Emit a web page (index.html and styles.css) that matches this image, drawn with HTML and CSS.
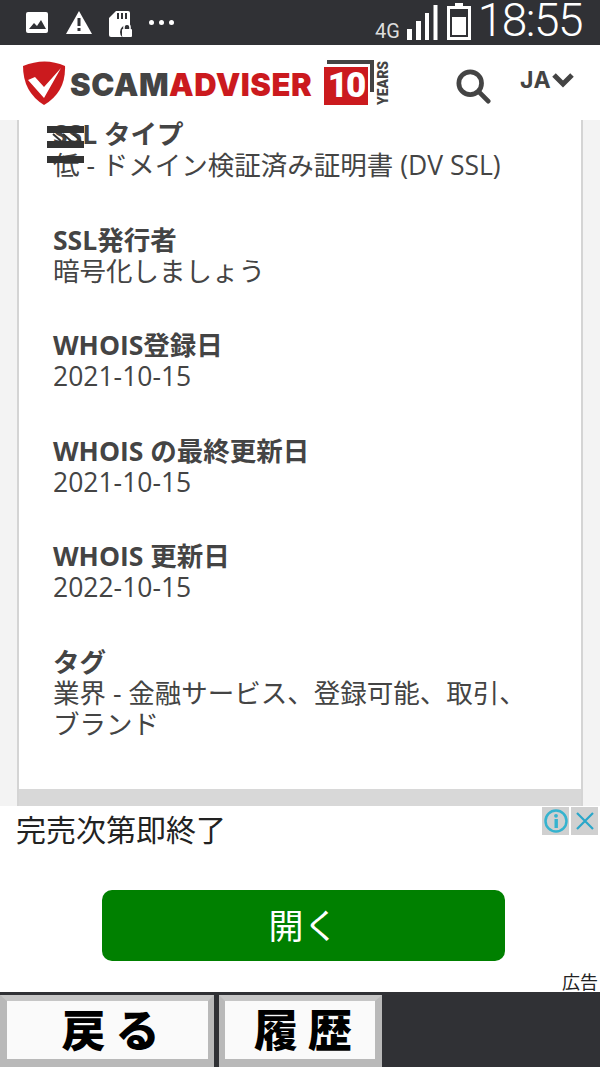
FILE: index.html
```html
<!DOCTYPE html>
<html lang="ja">
<head>
  <meta charset="UTF-8">
  <title>Scamadviser</title>
  <link rel="stylesheet" href="styles.css">
</head>
<body>

  <div class="status-bar">
    <div class="status-left">
      <svg width="24" height="23" viewBox="0 0 24 23"><rect x="1" y="1" width="22" height="21" rx="2" fill="#fff"/><path d="M4 18l5-6 3 3 4-6 5 9z" fill="#303135"/></svg>
      <svg width="26" height="23" viewBox="0 0 26 23"><path d="M13 0L26 23H0z" fill="#fff"/><rect x="11.5" y="7" width="3" height="8" fill="#303135"/><rect x="11.5" y="17" width="3" height="3" fill="#303135"/></svg>
      <svg width="24" height="26" viewBox="0 0 24 26"><path d="M7 0h12a2 2 0 0 1 2 2v24H2a2 2 0 0 1-2-2V7z" fill="#fff"/><path d="M8 2h2v6H8zM12 2h2v6h-2zM16 2h2v6h-2z" fill="#303135"/><circle cx="18" cy="21" r="7" fill="#303135"/><rect x="13" y="18" width="10" height="8" rx="1" fill="#fff"/><path d="M15 19v-3a3 3 0 0 1 6 0v3" fill="none" stroke="#fff" stroke-width="1.6"/></svg>
      <div class="dots"><span></span><span></span><span></span></div>
    </div>
    <div class="status-right">
      <span class="net">4G</span>
      <svg width="31" height="35" viewBox="0 0 31 35"><path d="M0 24h5v11H0zM9 16h5v19H9zM18 8h4v27h-4zM26.500 0h4v35h-4z" fill="#fff"/></svg>
      <svg class="battery" width="24" height="37" viewBox="0 0 24 37"><path d="M8 0h8v3h-8z" fill="#fff"/><rect x="1.500" y="4.500" width="21" height="31" fill="none" stroke="#fff" stroke-width="3"/><rect x="5" y="14" width="14" height="18" fill="#fff"/></svg>
      <span class="time">18:55</span>
    </div>
  </div>

  <header class="site-header">
    <svg class="shield" width="43" height="46" viewBox="0 0 43 46">
      <path d="M0 6Q22 -3 42 6Q43 32 21 45Q0 32 0 6z" fill="#cb1a1e"/>
      <path d="M5 20l7-3 9 10L38 8 21 38z" fill="#fff"/>
    </svg>
    <div class="brand"><span class="scam">SCAM</span><span class="adviser">ADVISER</span></div>
    <div class="anniversary">
      <div class="ten-back"></div>
      <div class="ten">10</div>
      <div class="years">YEARS</div>
    </div>
    <svg class="search" width="35" height="35" viewBox="0 0 37 37"><circle cx="15" cy="15" r="12" fill="none" stroke="#444" stroke-width="5"/><path d="M24 24l10 10" stroke="#444" stroke-width="5" stroke-linecap="round"/></svg>
    <div class="lang">JA<svg width="24" height="16" viewBox="0 0 24 16"><path d="M3 3l9 9 9-9" fill="none" stroke="#444" stroke-width="5"/></svg></div>
  </header>

  <main class="content">
    <div class="card">
      <div class="info-row">
        <h4>SSL タイプ</h4>
        <p>低 - ドメイン検証済み証明書 (DV SSL)</p>
        <svg class="scribble" width="37" height="37" viewBox="0 0 37 37"><path d="M0 0h37v7H0zM0 15h37v7H0zM0 30h37v7H0z" fill="#333"/><path d="M6 8l8 7M16 8l8 7M26 8l8 7" stroke="#333" stroke-width="2"/></svg>
      </div>
      <div class="info-row">
        <h4>SSL発行者</h4>
        <p>暗号化しましょう</p>
      </div>
      <div class="info-row">
        <h4>WHOIS登録日</h4>
        <p>2021-10-15</p>
      </div>
      <div class="info-row">
        <h4>WHOIS の最終更新日</h4>
        <p>2021-10-15</p>
      </div>
      <div class="info-row">
        <h4>WHOIS 更新日</h4>
        <p>2022-10-15</p>
      </div>
      <div class="info-row">
        <h4>タグ</h4>
        <p>業界 - 金融サービス、登録可能、取引、<br>ブランド</p>
      </div>
      <div class="card-foot"></div>
    </div>
  </main>

  <section class="ad">
    <div class="ad-title">完売次第即終了</div>
    <div class="ad-icons">
      <div class="ad-icon"><svg width="24" height="24" viewBox="0 0 24 24"><circle cx="12" cy="12" r="10.500" fill="none" stroke="#35b3cf" stroke-width="2.500"/><rect x="10.500" y="10" width="3.400" height="9" fill="#35b3cf"/><circle cx="12" cy="6.800" r="1.900" fill="#35b3cf"/></svg></div>
      <div class="ad-icon"><svg width="22" height="22" viewBox="0 0 22 22"><path d="M3 3l16 16M19 3L3 19" stroke="#2aa7c9" stroke-width="2.200"/></svg></div>
    </div>
    <button class="ad-button">開く</button>
    <div class="ad-label">広告</div>
  </section>

  <nav class="bottom-bar">
    <button class="nav-btn back">戻る</button>
    <button class="nav-btn history">履歴</button>
  </nav>

</body>
</html>
```

FILE: styles.css
```css
:root {
  --bar: #303135;
  --text-dark: #444;
  --brand-red: #cb1a1e;
}

* {
  box-sizing: border-box;
}

body {
  font-family: "Noto Sans CJK JP", "Open Sans", sans-serif;
  margin: 0;
  width: 600px;
  height: 1067px;
  overflow: hidden;
  display: flex;
  flex-direction: column;
  color: var(--text-dark);
}

/* status bar */
.status-bar {
  height: 45px;
  background-color: var(--bar);
  display: flex;
  justify-content: space-between;
  padding: 4px 18px 0 25px;
  color: #fff;
}

.status-left {
  display: flex;
  align-items: flex-start;
  gap: 17px;
  padding-top: 7px;
}

.dots {
  display: flex;
  gap: 5px;
  padding-top: 9px;
  margin-left: -1px;
}

.dots span {
  width: 5px;
  height: 5px;
  border-radius: 50%;
  background-color: #fff;
}

.status-right {
  display: flex;
  align-items: flex-end;
  height: 36px;
}

.net {
  font-family: "Roboto", sans-serif;
  font-size: 20px;
  line-height: 18px;
  color: #ddd;
  margin-right: 7px;
}

.battery {
  margin-left: 9px;
}

.time {
  font-family: "Roboto", sans-serif;
  font-weight: 300;
  font-size: 46px;
  line-height: 40px;
  letter-spacing: -1.5px;
  margin-left: 7px;
}

/* header */
.site-header {
  height: 75px;
  flex-shrink: 0;
  background-color: #fff;
  display: flex;
  align-items: center;
  padding: 0 0 0 23px;
}

.brand {
  font-family: "Inter", sans-serif;
  font-weight: 900;
  font-size: 31px;
  letter-spacing: 0.5px;
  width: 250px;
  white-space: nowrap;
  margin-left: 4px;
  margin-top: 3px;
}

.scam {
  color: var(--text-dark);
}

.adviser {
  color: var(--brand-red);
}

.anniversary {
  position: relative;
  width: 68px;
  height: 46px;
  margin-left: 4px;
}

.ten-back {
  position: absolute;
  left: 3px;
  top: 0;
  width: 47px;
  height: 32px;
  border-top: 4px solid #444;
  border-right: 4px solid #444;
}

.ten {
  position: absolute;
  left: 0;
  top: 7px;
  width: 44px;
  height: 38px;
  background-color: var(--brand-red);
  color: #fff;
  font-family: "Roboto", sans-serif;
  font-weight: 900;
  font-size: 35px;
  line-height: 38px;
  letter-spacing: -2px;
  text-align: center;
}

.years {
  position: absolute;
  left: 37px;
  top: 16px;
  width: 44px;
  font-family: "Roboto", sans-serif;
  font-weight: 900;
  font-size: 14px;
  line-height: 14px;
  text-align: center;
  transform: rotate(-90deg);
  color: #444;
}

.search {
  margin-left: 64px;
  margin-top: 7px;
}

.lang {
  font-family: "Inter", sans-serif;
  font-weight: 700;
  font-size: 23px;
  letter-spacing: 0.5px;
  margin-left: 29px;
  margin-bottom: 5px;
  display: flex;
  align-items: center;
}

/* content */
.content {
  height: 686px;
  flex-shrink: 0;
  overflow: hidden;
  background-color: #f3f3f3;
  padding: 0 17px;
}

.card {
  height: 100%;
  background-color: #fff;
  border-left: 2px solid #d4d4d4;
  border-right: 2px solid #d4d4d4;
  padding-left: 34px;
  display: flex;
  flex-direction: column;
  position: relative;
  font-family: "Open Sans", "Noto Sans CJK JP", sans-serif;
}

.info-row {
  position: relative;
  padding-bottom: 43.5px;
}

.info-row:first-child {
  margin-top: -1px;
}

.info-row h4 {
  font-size: 26.5px;
  line-height: 31px;
  font-weight: 700;
  margin: 0;
}

.info-row p {
  font-size: 26.5px;
  line-height: 31px;
  margin: 0;
}

.scribble {
  position: absolute;
  left: -6px;
  top: 7px;
}

.card-foot {
  position: absolute;
  left: 0;
  right: 0;
  bottom: 0;
  height: 17px;
  background-color: #d8d8d8;
}

/* ad */
.ad {
  height: 186px;
  flex-shrink: 0;
  position: relative;
  background-color: #fff;
  padding: 6px 16px 0;
}

.ad-title {
  font-size: 30px;
  line-height: 32px;
  color: #222;
}

.ad-icons {
  position: absolute;
  top: 1px;
  right: 2px;
  display: flex;
  gap: 2px;
}

.ad-icon {
  width: 27px;
  height: 28px;
  background-color: #d0d0d0;
  display: flex;
  align-items: center;
  justify-content: center;
}

.ad-button {
  display: block;
  width: 403px;
  height: 71px;
  margin: 46px 0 0 86px;
  padding: 0 0 4px;
  border: none;
  border-radius: 10px;
  background-color: #008000;
  color: #fff;
  font-family: inherit;
  font-size: 35px;
}

.ad-label {
  position: absolute;
  right: 2px;
  bottom: 0;
  font-size: 18px;
  line-height: 22px;
  color: #222;
}

/* bottom nav */
.bottom-bar {
  flex: 1;
  background-color: var(--bar);
  padding-top: 3px;
  display: flex;
  gap: 5px;
}

.nav-btn {
  height: 72px;
  padding: 0 0 4px 16px;
  border: 7px solid #b9b9b9;
  border-top: 6px solid #c6c6c6;
  border-bottom-width: 8px;
  background-color: #fafafa;
  color: #000;
  font-family: inherit;
  font-weight: 900;
  font-size: 44px;
  line-height: 50px;
  letter-spacing: 10px;
}

.back {
  width: 214px;
  border-right-width: 6px;
}

.history {
  width: 163px;
  border-left-width: 6px;
}
```
